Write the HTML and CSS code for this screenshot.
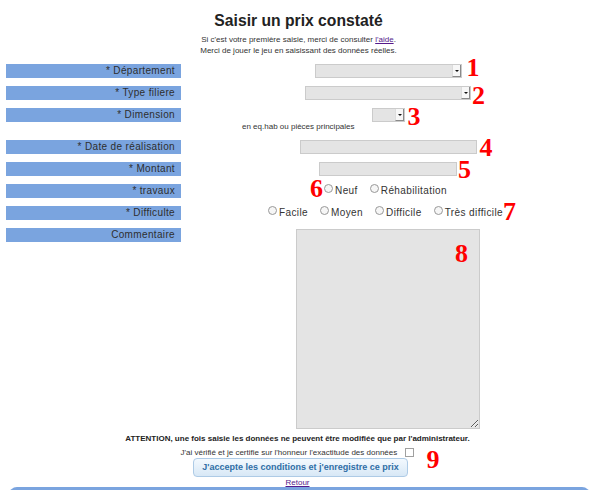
FILE: index.html
```html
<!DOCTYPE html>
<html lang="fr">
<head>
<meta charset="utf-8">
<title>Saisir un prix constaté</title>
<link rel="stylesheet" href="styles.css">
</head>
<body>
<div class="page">
  <h1 class="title">Saisir un prix constaté</h1>
  <p class="intro">Si c'est votre première saisie, merci de consulter <a class="link" href="#">l'aide</a>.<br>Merci de jouer le jeu en saisissant des données réelles.</p>

  <form class="form">
    <div class="row">
      <div class="lbl">* Département</div>
      <div class="val">
        <span class="field"><select class="sel sel-dep"><option></option></select><span class="arrow"></span><b class="num num-1">1</b></span>
      </div>
    </div>
    <div class="row">
      <div class="lbl">* Type filiere</div>
      <div class="val">
        <span class="field"><select class="sel sel-type"><option></option></select><span class="arrow"></span><b class="num num-2">2</b></span>
      </div>
    </div>
    <div class="row row-tight">
      <div class="lbl">* Dimension</div>
      <div class="val">
        <span class="field"><select class="sel sel-dim"><option></option></select><span class="arrow"></span><b class="num num-3">3</b></span>
      </div>
    </div>
    <div class="row row-note">
      <div></div>
      <div class="note">en eq.hab ou pièces principales</div>
    </div>
    <div class="row">
      <div class="lbl">* Date de réalisation</div>
      <div class="val">
        <span class="field"><input class="inp inp-date" type="text"><b class="num num-4">4</b></span>
      </div>
    </div>
    <div class="row">
      <div class="lbl">* Montant</div>
      <div class="val">
        <span class="field"><input class="inp inp-mont" type="text"><b class="num num-5">5</b></span>
      </div>
    </div>
    <div class="row">
      <div class="lbl">* travaux</div>
      <div class="val val-radio">
        <span class="field"><b class="num num-6">6</b><label class="opt"><input class="radio" type="radio" name="travaux">Neuf</label><label class="opt"><input class="radio" type="radio" name="travaux">Réhabilitation</label></span>
      </div>
    </div>
    <div class="row">
      <div class="lbl">* Difficulte</div>
      <div class="val val-radio">
        <span class="field"><label class="opt"><input class="radio" type="radio" name="diff">Facile</label><label class="opt"><input class="radio" type="radio" name="diff">Moyen</label><label class="opt"><input class="radio" type="radio" name="diff">Difficile</label><label class="opt"><input class="radio" type="radio" name="diff">Très difficile</label><b class="num num-7">7</b></span>
      </div>
    </div>
    <div class="row row-comment">
      <div class="lbl">Commentaire</div>
      <div class="val">
        <span class="field"><textarea class="comment"></textarea><b class="num num-8">8</b></span>
      </div>
    </div>
  </form>

  <div class="confirm">
    <p class="warning">ATTENTION, une fois saisie les données ne peuvent être modifiée que par l'administrateur.</p>
    <p class="certify">J'ai vérifié et je certifie sur l'honneur l'exactitude des données <span class="field"><input class="check" type="checkbox"><b class="num num-9">9</b></span></p>
    <div class="actions"><button class="submit" type="button">J'accepte les conditions et j'enregistre ce prix</button></div>
    <p class="back"><a class="link" href="#">Retour</a></p>
  </div>
  <div class="footer"></div>
</div>
</body>
</html>
```
FILE: styles.css
```css
* { box-sizing: border-box; }

body {
  margin: 0;
  background: #fff;
  font-family: "Liberation Sans", Arial, sans-serif;
  color: #333;
}

.page {
  padding: 0 5px 0 6px;
}

.title {
  margin: 11px 0 0;
  padding-right: 4px;
  font-size: 15.7px;
  line-height: 19px;
  font-weight: bold;
  color: #222;
  text-align: center;
}

.intro {
  margin: 4px 0 8px;
  padding-right: 4px;
  font-size: 8px;
  line-height: 11px;
  text-align: center;
  color: #333;
}

.link {
  color: #551a8b;
  text-decoration: underline;
}

.form {
  margin: 0;
}

.row {
  display: grid;
  grid-template-columns: 175px 1fr;
  margin-bottom: 8px;
}

.row-tight { margin-bottom: 0; }

.lbl {
  height: 14px;
  line-height: 14px;
  padding-right: 6px;
  background: #7aa4df;
  font-size: 10px;
  letter-spacing: 0.35px;
  text-align: right;
  color: #2e2e2e;
  white-space: nowrap;
}

.val {
  height: 14px;
  line-height: 14px;
  text-align: center;
  font-size: 10px;
}

.val-radio { padding-right: 5px; }

.field {
  position: relative;
  display: inline-block;
  vertical-align: top;
}

.sel,
.inp {
  display: block;
  height: 14px;
  margin: 0;
  padding: 0 2px;
  border: 1px solid #cbcbcb;
  background: #e4e4e4;
  font-size: 9px;
  -webkit-appearance: none;
  appearance: none;
  border-radius: 0;
  outline: none;
}

.sel-dep { width: 147px; }
.sel-type { width: 166px; }
.sel-dim { width: 33px; }
.inp-date { width: 177px; }
.inp-mont { width: 138px; }

.arrow {
  position: absolute;
  top: 1px;
  right: 1px;
  width: 9px;
  height: 12px;
  background: #f7f7f7;
  border-right: 1px solid #8a8a8a;
  border-bottom: 1px solid #8a8a8a;
  border-left: 1px solid #dcdcdc;
}

.arrow::after {
  content: "";
  position: absolute;
  left: 2px;
  top: 5px;
  border-left: 2px solid transparent;
  border-right: 2px solid transparent;
  border-top: 2px solid #111;
}

.row-note { margin-bottom: 8px; }

.note {
  height: 10px;
  line-height: 10px;
  padding-left: 61px;
  font-size: 8px;
  color: #333;
}

.opt {
  display: inline-block;
  margin-left: 12px;
  font-size: 10px;
  letter-spacing: 0.4px;
  color: #333;
  white-space: nowrap;
}

.opt:first-of-type { margin-left: 0; }

.radio {
  -webkit-appearance: none;
  appearance: none;
  display: inline-block;
  width: 9px;
  height: 9px;
  margin: 0 2px 0 0;
  vertical-align: 1px;
  border: 1px solid #999;
  border-radius: 50%;
  background: #f6f6f6;
}

.row-comment { margin-bottom: 5px; }
.row-comment .val { height: auto; }

.comment {
  display: block;
  width: 184px;
  height: 200px;
  margin: 1px 0 0;
  border: 1px solid #cbcbcb;
  background: #e4e4e4;
  resize: both;
  outline: none;
}

.num {
  position: absolute;
  font-family: "Liberation Serif", "Times New Roman", serif;
  font-weight: bold;
  font-size: 26px;
  line-height: 26px;
  letter-spacing: 0;
  color: #f00;
  text-align: left;
}

.num-1 { left: calc(100% + 5px); top: -9px; }
.num-2 { left: calc(100% + 1px); top: -3px; }
.num-3 { left: calc(100% + 3px); top: -4px; }
.num-4 { left: calc(100% + 3px); top: -5px; }
.num-5 { left: calc(100% + 1px); top: -5px; }
.num-6 { right: calc(100% + 1px); top: -8px; }
.num-7 { left: 100%; top: -7px; }
.num-8 { right: 12px; top: 13px; }
.num-9 { left: calc(100% + 12px); top: -1px; }

.confirm {
  text-align: center;
  padding-right: 6px;
}

.warning {
  margin: 0;
  font-size: 8px;
  line-height: 10px;
  font-weight: bold;
  color: #222;
}

.certify {
  margin: 4px 0 0;
  font-size: 8px;
  line-height: 10px;
  color: #333;
}

.check {
  -webkit-appearance: none;
  appearance: none;
  display: inline-block;
  width: 9px;
  height: 9px;
  margin: 0 0 0 6px;
  vertical-align: 1px;
  border: 1px solid #a0a0a0;
  background: #fff;
}

.actions {
  margin-top: -3px;
  padding-left: 6px;
  line-height: 0;
}

.submit {
  display: inline-block;
  width: 215px;
  height: 19px;
  margin: 0;
  padding: 0;
  border: 1px solid #aecbe6;
  border-radius: 4px;
  background: linear-gradient(#f3f9fe, #d8e8f6);
  font-family: "Liberation Sans", Arial, sans-serif;
  font-size: 9px;
  line-height: 17px;
  font-weight: bold;
  color: #2f6ea6;
}

.back {
  margin: 0;
  font-size: 8px;
  line-height: 11px;
}

.footer {
  height: 20px;
  margin: -1px 5px 0 3px;
  border-radius: 8px 8px 0 0;
  background: #7aa4df;
}
```
